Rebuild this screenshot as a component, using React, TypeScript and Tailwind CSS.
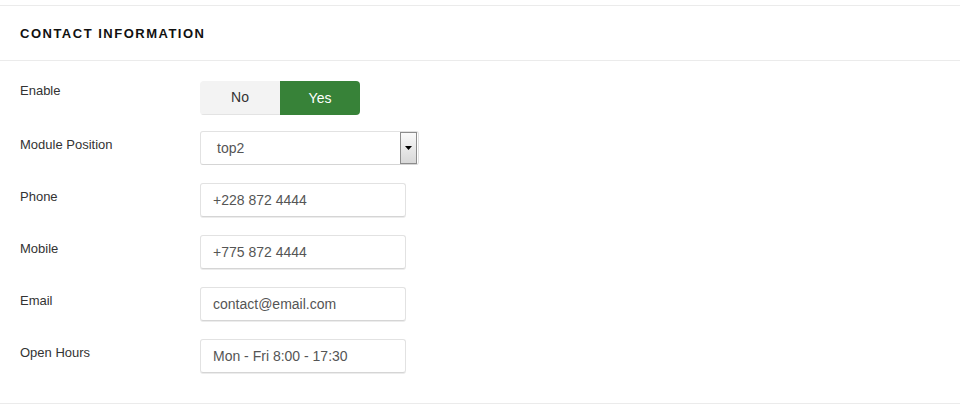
import React from "react";

const inputs = [
  { label: "Phone", value: "+228 872 4444" },
  { label: "Mobile", value: "+775 872 4444" },
  { label: "Email", value: "contact@email.com" },
  { label: "Open Hours", value: "Mon - Fri 8:00 - 17:30" },
];

export default function App() {
  return (
    <div className="w-[960px] h-[406px] bg-white text-[#333]" style={{ fontFamily: '"Liberation Sans", Arial, sans-serif' }}>
      <div className="h-[5px]" />
      <div className="border-t border-[#ebebeb]">
        <div className="h-[55px] flex items-center px-5 border-b border-[#ebebeb] pt-[2px]">
          <h2 className="text-[13px] font-bold tracking-[1.5px] text-[#111] uppercase">Contact Information</h2>
        </div>
        <div className="pt-5 h-[343px] border-b border-[#ebebeb]">
          <div className="flex h-[50px]">
            <div className="w-[200px] pl-5 text-[13px] leading-[18px] pt-px">Enable</div>
            <div className="flex h-[34px] rounded-[4px] overflow-hidden text-[14px]">
              <div className="w-[80px] flex items-center justify-center bg-[#f3f3f3] text-[#333] border-b border-[#e3e3e3]">No</div>
              <div className="w-[80px] flex items-center justify-center bg-[#378238] text-white">Yes</div>
            </div>
          </div>
          <div className="flex h-[52px]">
            <div className="w-[200px] pl-5 text-[13px] leading-[18px] pt-[5px]">Module Position</div>
            <div className="w-[219px] h-[34px] border border-[#e2e2e2] border-b-[#d5d5d5] rounded-[3px] flex items-center justify-between pl-4 pr-px text-[14px] text-[#555]">
              <span>top2</span>
              <div className="w-[17px] h-[32px] border border-[#8c8c8c] bg-gradient-to-b from-[#fafafa] to-[#d8d8d8] flex items-center justify-center">
                <svg width="7" height="4" viewBox="0 0 7 4"><path d="M0 0h7L3.5 4z" fill="#000" /></svg>
              </div>
            </div>
          </div>
          {inputs.map((f) => (
            <div key={f.label} className="flex h-[52px]">
              <div className="w-[200px] pl-5 text-[13px] leading-[18px] pt-[5px]">{f.label}</div>
              <div className="w-[206px] h-[34px] border border-[#e2e2e2] border-b-[#d5d5d5] rounded-[3px] flex items-center px-3 text-[14px] text-[#555] shadow-[0_1px_0_#ececec]">
                {f.value}
              </div>
            </div>
          ))}
        </div>
      </div>
    </div>
  );
}
